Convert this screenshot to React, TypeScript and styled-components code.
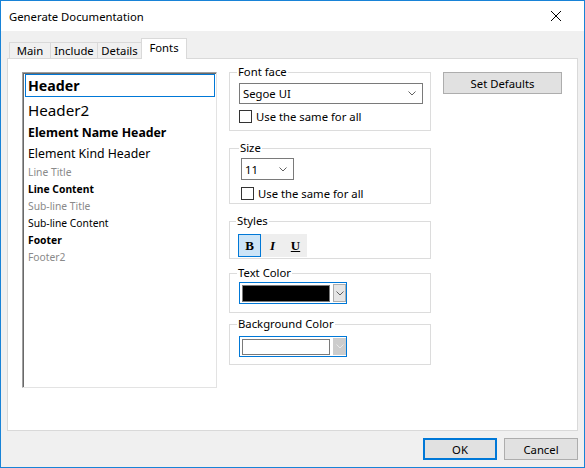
import React from 'react';
import styled, { createGlobalStyle } from 'styled-components';

const UI = `"Noto Sans", "Segoe UI", sans-serif`;
const FS = 11.3;

const GlobalStyle = createGlobalStyle`
  html, body { margin: 0; padding: 0; background: #fff; }
  body { font-family: ${UI}; font-size: ${FS}px; color: #000; }
  * { box-sizing: border-box; }
`;

const Window = styled.div`
  width: 585px;
  height: 468px;
  border: 1px solid #1883d7;
  display: flex;
  flex-direction: column;
  background: #f0f0f0;
`;

const TitleBar = styled.div`
  height: 30px;
  flex: none;
  background: #fff;
  display: flex;
  align-items: center;
  justify-content: space-between;
  padding-left: 8px;
`;

const Title = styled.span`
  font-size: ${FS}px;
`;

const CloseBox = styled.div`
  width: 56px;
  height: 30px;
  display: flex;
  align-items: center;
  justify-content: center;
`;

const Body = styled.div`
  flex: 1;
  display: flex;
  flex-direction: column;
  padding: 7px 6px 7px 6px;
  min-height: 0;
`;

const TabStrip = styled.div`
  height: 20px;
  flex: none;
  display: flex;
  align-items: flex-end;
  padding-left: 2px;
  position: relative;
  z-index: 1;
`;

const Tab = styled.div<{ $w: number; $active?: boolean }>`
  width: ${p => p.$w}px;
  height: ${p => (p.$active ? 21 : 16)}px;
  margin-bottom: ${p => (p.$active ? -1 : 0)}px;
  margin-left: -1px;
  border: 1px solid #d9d9d9;
  border-bottom: none;
  background: ${p => (p.$active ? '#fff' : '#f0f0f0')};
  display: flex;
  align-items: center;
  justify-content: center;
  padding-bottom: ${p => (p.$active ? 3 : 0)}px;
  font-size: ${FS}px;
  &:first-child { margin-left: 0; }
`;

const Panel = styled.div`
  flex: 1;
  background: #fff;
  border: 1px solid #d9d9d9;
  display: grid;
  grid-template-columns: 195px 202px 119px;
  column-gap: 12px;
  align-items: start;
  padding: 6px 0 0 14px;
`;

const ListBox = styled.div`
  margin-top: 7px;
  height: 316px;
  border: 1px solid;
  border-color: #a0a0a0 #e3e3e3 #e3e3e3 #a0a0a0;
  box-shadow: inset 1px 1px 0 #696969;
  padding: 1px 1px 0 2px;
  display: flex;
  flex-direction: column;
`;

const ListItem = styled.div<{
  $h: number;
  $size: number;
  $bold?: boolean;
  $gray?: boolean;
  $focused?: boolean;
}>`
  height: ${p => p.$h}px;
  flex: none;
  display: flex;
  align-items: center;
  padding-left: 2px;
  border: 1px solid ${p => (p.$focused ? '#0078d7' : 'transparent')};
  font-size: ${p => p.$size}px;
  font-weight: ${p => (p.$bold ? 700 : 400)};
  color: ${p => (p.$gray ? '#8a8a8a' : '#000')};
  white-space: nowrap;
`;

const Groups = styled.div`
  display: flex;
  flex-direction: column;
`;

const Group = styled.fieldset<{ $mt: number; $pb: number; $pl?: number }>`
  margin: ${p => p.$mt}px 0 0 0;
  padding: 0 0 ${p => p.$pb}px ${p => p.$pl ?? 9}px;
  border: 1px solid #dcdcdc;
  min-width: 0;
`;

const Legend = styled.legend`
  padding: 0 1px;
  margin-left: -2px;
  font-size: ${FS}px;
  line-height: 14px;
`;

const Select = styled.div<{ $w: number; $h: number; $mt: number }>`
  width: ${p => p.$w}px;
  height: ${p => p.$h}px;
  margin-top: ${p => p.$mt}px;
  border: 1px solid #7a7a7a;
  background: #fff;
  display: flex;
  align-items: center;
  justify-content: space-between;
  padding: 0 6px 0 3px;
  font-size: ${FS}px;
`;

const CheckRow = styled.label<{ $mt: number }>`
  display: flex;
  align-items: center;
  gap: 4px;
  margin-top: ${p => p.$mt}px;
  height: 13px;
  font-size: ${FS}px;
`;

const CheckBox = styled.span`
  width: 13px;
  height: 13px;
  border: 1px solid #333;
  background: #fff;
  flex: none;
`;

const ToolBar = styled.div`
  margin-top: 6px;
  width: 69px;
  height: 23px;
  background: #eeeeee;
  display: flex;
`;

const ToolButton = styled.div<{ $active?: boolean; $italic?: boolean; $underline?: boolean }>`
  width: 23px;
  height: 23px;
  border: 1px solid ${p => (p.$active ? '#0078d7' : 'transparent')};
  background: ${p => (p.$active ? '#cce4f7' : 'transparent')};
  display: flex;
  align-items: center;
  justify-content: center;
  font-family: "Liberation Serif", serif;
  font-weight: 700;
  font-size: 13px;
  font-style: ${p => (p.$italic ? 'italic' : 'normal')};
  text-decoration: ${p => (p.$underline ? 'underline' : 'none')};
`;

const ColorCombo = styled.div<{ $mt: number; $h: number }>`
  margin-top: ${p => p.$mt}px;
  width: 108px;
  height: ${p => p.$h}px;
  border: 1px solid #0078d7;
  display: flex;
  padding: 2px 0 1px 2px;
  gap: 3px;
  background: #fff;
`;

const Swatch = styled.div<{ $color: string }>`
  width: 88px;
  border: 1px solid #7a7a7a;
  background: ${p => p.$color};
`;

const DropButton = styled.div<{ $disabled?: boolean }>`
  width: 13px;
  margin-top: -1px;
  border: 1px solid ${p => (p.$disabled ? '#cccccc' : '#adadad')};
  background: ${p => (p.$disabled ? '#cccccc' : '#e5e5e5')};
  display: flex;
  align-items: center;
  justify-content: center;
`;

const Button = styled.div<{ $w: number; $mt?: number; $default?: boolean }>`
  width: ${p => p.$w}px;
  height: 22px;
  margin-top: ${p => p.$mt ?? 0}px;
  background: #e1e1e1;
  border: ${p => (p.$default ? '2px solid #0078d7' : '1px solid #adadad')};
  display: flex;
  align-items: center;
  justify-content: center;
  font-size: ${FS}px;
`;

const Footer = styled.div`
  flex: none;
  display: flex;
  justify-content: flex-end;
  gap: 7px;
  margin-top: 7px;
`;

const Chevron = ({ color = '#606060' }: { color?: string }) => (
  <svg width="8" height="5" viewBox="0 0 8 5">
    <polyline points="0.5,0.5 4,4 7.5,0.5" fill="none" stroke={color} strokeWidth="1" />
  </svg>
);

const CloseIcon = () => (
  <svg width="10" height="10" viewBox="0 0 10 10">
    <path d="M0 0 L10 10 M10 0 L0 10" stroke="#000" strokeWidth="1" />
  </svg>
);

const items = [
  { label: 'Header', h: 23, size: 14.2, bold: true, focused: true },
  { label: 'Header2', h: 25, size: 15.2 },
  { label: 'Element Name Header', h: 21, size: 12.3, bold: true },
  { label: 'Element Kind Header', h: 20, size: 12.3 },
  { label: 'Line Title', h: 17, size: 10.3, gray: true },
  { label: 'Line Content', h: 17, size: 10.3, bold: true },
  { label: 'Sub-line Title', h: 17, size: 10.3, gray: true },
  { label: 'Sub-line Content', h: 17, size: 10.3 },
  { label: 'Footer', h: 17, size: 10.3, bold: true },
  { label: 'Footer2', h: 17, size: 10.3, gray: true },
];

export default function App() {
  return (
    <>
      <GlobalStyle />
      <Window>
        <TitleBar>
          <Title>Generate Documentation</Title>
          <CloseBox>
            <CloseIcon />
          </CloseBox>
        </TitleBar>
        <Body>
          <TabStrip>
            <Tab $w={42}>Main</Tab>
            <Tab $w={48}>Include</Tab>
            <Tab $w={45}>Details</Tab>
            <Tab $w={46} $active>Fonts</Tab>
          </TabStrip>
          <Panel>
            <ListBox>
              {items.map(it => (
                <ListItem
                  key={it.label}
                  $h={it.h}
                  $size={it.size}
                  $bold={it.bold}
                  $gray={it.gray}
                  $focused={it.focused}
                >
                  {it.label}
                </ListItem>
              ))}
            </ListBox>
            <Groups>
              <Group $mt={0} $pb={7}>
                <Legend>Font face</Legend>
                <Select $w={184} $h={21} $mt={4}>
                  Segoe UI
                  <Chevron />
                </Select>
                <CheckRow $mt={6}>
                  <CheckBox />
                  Use the same for all
                </CheckRow>
              </Group>
              <Group $mt={10} $pb={3} $pl={11}>
                <Legend>Size</Legend>
                <Select $w={53} $h={22} $mt={3}>
                  11
                  <Chevron />
                </Select>
                <CheckRow $mt={7}>
                  <CheckBox />
                  Use the same for all
                </CheckRow>
              </Group>
              <Group $mt={10} $pb={1} $pl={8}>
                <Legend>Styles</Legend>
                <ToolBar>
                  <ToolButton $active>B</ToolButton>
                  <ToolButton $italic>I</ToolButton>
                  <ToolButton $underline>U</ToolButton>
                </ToolBar>
              </Group>
              <Group $mt={7} $pb={8}>
                <Legend>Text Color</Legend>
                <ColorCombo $mt={2} $h={22}>
                  <Swatch $color="#000" />
                  <DropButton>
                    <Chevron />
                  </DropButton>
                </ColorCombo>
              </Group>
              <Group $mt={4} $pb={7}>
                <Legend>Background Color</Legend>
                <ColorCombo $mt={5} $h={21}>
                  <Swatch $color="#fff" />
                  <DropButton $disabled>
                    <Chevron color="#e8e8e8" />
                  </DropButton>
                </ColorCombo>
              </Group>
            </Groups>
            <Button $w={119} $mt={7}>Set Defaults</Button>
          </Panel>
          <Footer>
            <Button $w={74} $default>OK</Button>
            <Button $w={74}>Cancel</Button>
          </Footer>
        </Body>
      </Window>
    </>
  );
}
